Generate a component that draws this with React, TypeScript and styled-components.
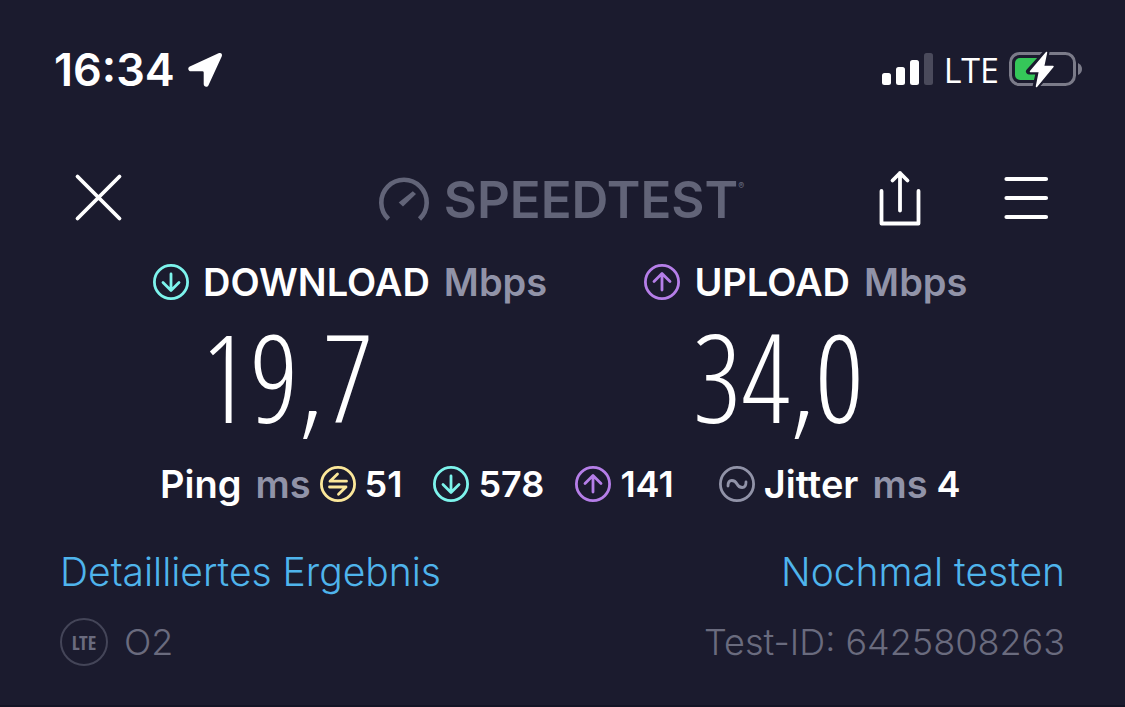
import React from "react";
import styled, { createGlobalStyle } from "styled-components";

const colors = {
  bg: "#1b1b2e",
  edge: "#131425",
  white: "#ffffff",
  muted: "#9193a8",
  logo: "#626478",
  faint: "#6a6b7e",
  ring: "#444558",
  link: "#4fb4ec",
  down: "#7df3ec",
  up: "#b57ee8",
  idle: "#fbe79a",
};

const GlobalStyle = createGlobalStyle`
  *, *::before, *::after { box-sizing: border-box; }
  body {
    margin: 0;
    background: ${colors.bg};
    color: ${colors.white};
    font-family: Inter, "Liberation Sans", sans-serif;
  }
  svg { display: block; flex: none; }
`;

const Page = styled.main`
  min-height: 100vh;
  padding: 44px 60px 0;
  border-bottom: 2px solid ${colors.edge};
`;

const StatusBar = styled.div`
  display: flex;
  align-items: center;
  justify-content: space-between;
  height: 52px;
  margin: 0 -18px 0 -6px;
`;

const StatusGroup = styled.div<{ $gap: number }>`
  display: flex;
  align-items: center;
  gap: ${(p) => p.$gap}px;
`;

const Clock = styled.time`
  font-size: 45px;
  font-weight: 600;
  line-height: 52px;
`;

const Carrier = styled.span`
  font-size: 34px;
  font-weight: 500;
  line-height: 52px;
  font-family: "Open Sans", "Noto Sans", sans-serif;
`;

const Header = styled.header`
  display: grid;
  grid-template-columns: 1fr auto 1fr;
  align-items: center;
  height: 60px;
  margin-top: 72px;
  padding: 0 15px 0 12px;
`;

const Actions = styled.div`
  display: flex;
  justify-content: flex-end;
  gap: 78px;
`;

const IconButton = styled.button`
  display: flex;
  align-items: center;
  justify-self: start;
  padding: 0;
  border: 0;
  background: none;
  color: inherit;
  cursor: pointer;
`;

const Brand = styled.div`
  display: flex;
  align-items: center;
  gap: 14px;
  padding-top: 3px;
  color: ${colors.logo};
`;

const BrandName = styled.h1`
  display: flex;
  margin: 0;
  font-size: 51px;
  font-weight: 600;
  line-height: 56px;
`;

const Registered = styled.sup`
  padding-top: 8px;
  font-size: 9px;
  line-height: 12px;
`;

const Results = styled.section`
  display: grid;
  grid-template-columns: 3fr 2fr;
  margin-top: 34px;
  padding: 0 93px;
`;

const ResultTitle = styled.h2`
  display: flex;
  align-items: center;
  gap: 14px;
  margin: 0;
  font-size: 38px;
  font-weight: 600;
  line-height: 40px;
  white-space: nowrap;
`;

const Unit = styled.span`
  color: ${colors.muted};
`;

const Speed = styled.p`
  margin: 4px 0 0 48px;
  font-family: "Open Sans Condensed Light", "Open Sans Condensed", Roboto, sans-serif;
  font-size: 122px;
  font-weight: 300;
  line-height: 140px;
`;

const Latency = styled.section`
  display: flex;
  align-items: center;
  gap: 31px;
  margin-top: 16px;
  padding: 0 100px;
  font-size: 36px;
  font-weight: 600;
  line-height: 44px;
  white-space: nowrap;
`;

const Reading = styled.div`
  display: flex;
  align-items: center;
  gap: 9px;
`;

const Label = styled.span`
  display: flex;
  gap: 14px;
  font-size: 38px;
`;

const JitterReading = styled(Reading)`
  margin-left: 14px;
`;

const Row = styled.div<{ $top: number; $size: number }>`
  display: flex;
  align-items: center;
  justify-content: space-between;
  height: 48px;
  margin-top: ${(p) => p.$top}px;
  font-size: ${(p) => p.$size}px;
  font-weight: 300;
  color: ${colors.faint};
`;

const TextLink = styled.a`
  color: ${colors.link};
  text-decoration: none;
`;

const Provider = styled.div`
  display: flex;
  align-items: center;
  gap: 16px;
`;

const NetworkBadge = styled.span`
  display: flex;
  align-items: center;
  justify-content: center;
  width: 48px;
  height: 48px;
  border: 2px solid ${colors.ring};
  border-radius: 50%;
  font-family: "Open Sans Condensed", Roboto, sans-serif;
  font-size: 20px;
  font-weight: 600;
`;

type Kind = "down" | "up" | "idle" | "jitter";

const glyphs: Record<Kind, { color: string; d: string }> = {
  down: { color: colors.down, d: "M18 10V26M10 18.500L18 26.500L26 18.500" },
  up: { color: colors.up, d: "M18 26V10M10 17.500L18 9.500L26 17.500" },
  idle: { color: colors.idle, d: "M17.500 8L10 15.200H26.500M9.500 21H26L18.500 28.200" },
  jitter: { color: colors.muted, d: "M9 20C9 12 16 14 18 18S27 24 27 16" },
};

const Badge = ({ kind }: { kind: Kind }) => (
  <svg width="36" height="36" viewBox="0 0 36 36" fill="none" stroke={glyphs[kind].color} strokeWidth="2.800" strokeLinecap="round" strokeLinejoin="round" aria-hidden="true">
    <circle cx="18" cy="18" r="16.600" />
    <path d={glyphs[kind].d} />
  </svg>
);

const LocationArrow = () => (
  <svg width="36" height="36" viewBox="0 0 36 36" fill="#fff" aria-hidden="true">
    <path d="M31.500 1.300C34 .2 35.800 2 34.700 4.500L21.500 33.200C20.300 35.700 16.700 35 16.700 32V20.600Q16.700 19.300 15.400 19.300H4C1 19.300.3 15.700 2.800 14.500Z" />
  </svg>
);

const Signal = () => (
  <svg width="52" height="34" viewBox="0 0 52 34" fill="#fff" aria-hidden="true">
    <rect x="0" y="20" width="9" height="12" rx="2.500" />
    <rect x="14" y="14" width="9" height="18" rx="2.500" />
    <rect x="28" y="7" width="9" height="25" rx="2.500" />
    <rect x="42" y="0" width="9" height="32" rx="2.500" fill="#4a4a5b" />
  </svg>
);

const Battery = () => (
  <svg width="74" height="38" viewBox="0 0 74 38" aria-hidden="true">
    <rect x="1.500" y="2.500" width="64" height="31" rx="9" fill="none" stroke="#7b7b89" strokeWidth="3" />
    <path d="M69 12Q73 14 73 18T69 24Z" fill="#7b7b89" />
    <rect x="6" y="7" width="27" height="22" rx="5" fill="#35c759" />
    <path d="M37.500 1L20 20.500H30L26.500 36L45 15.500H34.500Z" fill="#fff" stroke={colors.bg} strokeWidth="6" strokeLinejoin="round" />
    <path d="M37.500 1.500L21.500 20.500H30.500L27.500 35.500L44 15.500H34.500Z" fill="#fff" stroke="#fff" strokeWidth="1.500" strokeLinejoin="round" />
  </svg>
);

const Gauge = () => (
  <svg width="52" height="46" viewBox="0 0 52 46" fill="none" stroke="currentColor" strokeWidth="4.600" aria-hidden="true">
    <path d="M10.500 42A22.700 22.700 0 1 1 41.500 42" />
    <path d="M34.800 14.300L38 17L25 29.500L20.700 25.500Z" fill="currentColor" stroke="none" />
  </svg>
);

const CloseIcon = () => (
  <svg width="52" height="52" viewBox="0 0 52 52" fill="none" stroke="currentColor" strokeWidth="3.800" strokeLinecap="round" aria-hidden="true">
    <path d="M5.500 4.500L47.500 46.500M47.500 4.500L5.500 46.500" />
  </svg>
);

const ShareIcon = () => (
  <svg width="44" height="56" viewBox="0 0 44 56" fill="none" stroke="currentColor" strokeWidth="3.800" strokeLinecap="round" strokeLinejoin="round" aria-hidden="true">
    <path d="M3.500 21V53.500H40.500V21M22 40.500V3M14.500 10.500L22 3L29.500 10.500" />
  </svg>
);

const MenuIcon = () => (
  <svg width="50" height="56" viewBox="0 0 50 56" fill="none" stroke="currentColor" strokeWidth="4.200" strokeLinecap="round" aria-hidden="true">
    <path d="M6.500 9H46M6.500 28H46M6.500 47H46" />
  </svg>
);

export default function App() {
  return (
    <>
      <GlobalStyle />
      <Page>
        <StatusBar>
          <StatusGroup $gap={12}>
            <Clock>16:34</Clock>
            <LocationArrow />
          </StatusGroup>
          <StatusGroup $gap={10}>
            <Signal />
            <Carrier>LTE</Carrier>
            <Battery />
          </StatusGroup>
        </StatusBar>

        <Header>
          <IconButton type="button" aria-label="Schließen">
            <CloseIcon />
          </IconButton>
          <Brand>
            <Gauge />
            <BrandName>
              SPEEDTEST<Registered>®</Registered>
            </BrandName>
          </Brand>
          <Actions>
            <IconButton type="button" aria-label="Teilen">
              <ShareIcon />
            </IconButton>
            <IconButton type="button" aria-label="Menü">
              <MenuIcon />
            </IconButton>
          </Actions>
        </Header>

        <Results>
          <div>
            <ResultTitle>
              <Badge kind="down" />
              DOWNLOAD <Unit>Mbps</Unit>
            </ResultTitle>
            <Speed>19,7</Speed>
          </div>
          <div>
            <ResultTitle>
              <Badge kind="up" />
              UPLOAD <Unit>Mbps</Unit>
            </ResultTitle>
            <Speed>34,0</Speed>
          </div>
        </Results>

        <Latency>
          <Reading>
            <Label>
              Ping <Unit>ms</Unit>
            </Label>
            <Badge kind="idle" />
            51
          </Reading>
          <Reading>
            <Badge kind="down" />
            578
          </Reading>
          <Reading>
            <Badge kind="up" />
            141
          </Reading>
          <JitterReading>
            <Badge kind="jitter" />
            <Label>
              Jitter <Unit>ms</Unit>
            </Label>
            4
          </JitterReading>
        </Latency>

        <Row $top={41} $size={39}>
          <TextLink href="#details">Detailliertes Ergebnis</TextLink>
          <TextLink href="#retest">Nochmal testen</TextLink>
        </Row>
        <Row $top={23} $size={36}>
          <Provider>
            <NetworkBadge>LTE</NetworkBadge>
            O2
          </Provider>
          <span>Test-ID: 6425808263</span>
        </Row>
      </Page>
    </>
  );
}
